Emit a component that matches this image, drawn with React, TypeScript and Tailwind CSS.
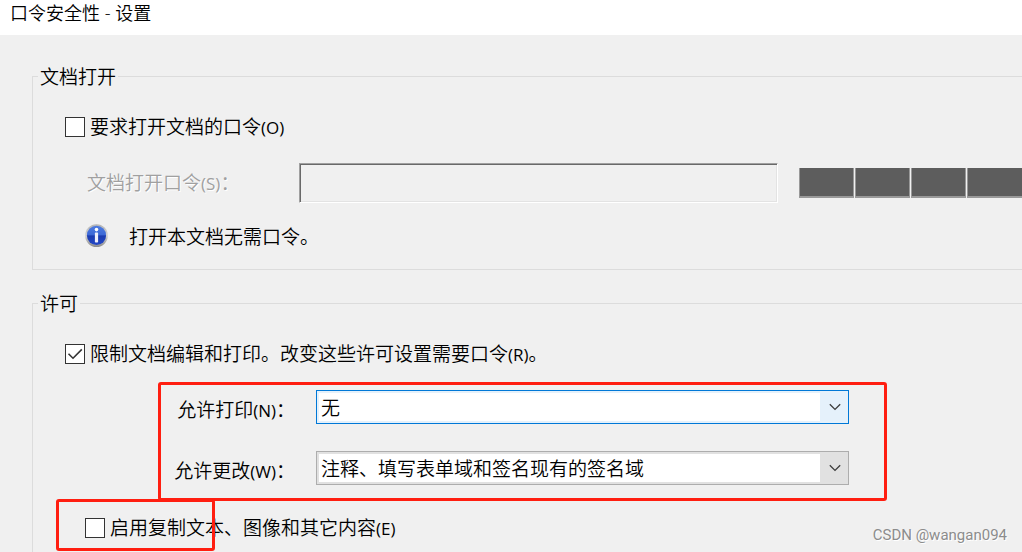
import type { ReactNode } from "react";

function Key({ children }: { children: ReactNode }) {
  return <span className="font-['Open_Sans',sans-serif] text-[17px] font-normal">{children}</span>;
}

function CheckBox({ id, checked, children }: { id: string; checked?: boolean; children: ReactNode }) {
  return (
    <div className="relative flex h-[26px] items-center gap-[5px]">
      <span className="relative flex size-5 shrink-0">
        <input
          id={id}
          type="checkbox"
          defaultChecked={checked}
          className="peer size-5 appearance-none border border-[#333] bg-white"
        />
        <svg
          viewBox="0 0 20 20"
          className="pointer-events-none absolute inset-0 hidden size-5 peer-checked:block"
          fill="none"
          stroke="#333"
          strokeWidth="1.6"
        >
          <path d="M3.5 9.8 L8 14.2 L16.8 5.4" />
        </svg>
      </span>
      <label htmlFor={id} className="whitespace-nowrap">
        {children}
      </label>
    </div>
  );
}

function DropDown({ id, options, active }: { id: string; options: string[]; active?: boolean }) {
  return (
    <div
      className={`relative h-[34px] w-full max-w-[533px] border p-0.5 ${
        active ? "border-[#0078d7] bg-[#e5f1fb]" : "border-[#adadad] bg-[#e1e1e1]"
      }`}
    >
      <select id={id} className="block h-full w-full appearance-none bg-white pl-0.5 outline-none">
        {options.map((o) => (
          <option key={o}>{o}</option>
        ))}
      </select>
      <span
        className={`pointer-events-none absolute inset-y-0 right-0 flex w-7 items-center justify-center pl-0.5 ${
          active ? "bg-[#e5f1fb]" : "bg-[#e1e1e1]"
        }`}
      >
        <svg width="12" height="8" viewBox="0 0 12 8" fill="none" stroke="#3c3c3c" strokeWidth="1.3">
          <path d="M0.8 1.2 L6 6.4 L11.2 1.2" />
        </svg>
      </span>
    </div>
  );
}

function InfoIcon() {
  return (
    <svg width="24" height="24" viewBox="0 0 24 24" className="shrink-0">
      <defs>
        <linearGradient id="ring" x1="0" y1="0" x2="0" y2="1">
          <stop offset="0" stopColor="#b4b4b4" />
          <stop offset="0.5" stopColor="#d4d4d4" />
          <stop offset="1" stopColor="#8c8c8c" />
        </linearGradient>
        <linearGradient id="ball" x1="0" y1="0" x2="0" y2="1">
          <stop offset="0" stopColor="#4d7be0" />
          <stop offset="0.48" stopColor="#3c68d6" />
          <stop offset="0.52" stopColor="#1c3cae" />
          <stop offset="1" stopColor="#2448c8" />
        </linearGradient>
      </defs>
      <circle cx="11.5" cy="11.6" r="11.4" fill="url(#ring)" />
      <circle cx="11.5" cy="11.4" r="9.6" fill="url(#ball)" />
      <circle cx="11.5" cy="5.6" r="1.8" fill="#fff" />
      <rect x="9.9" y="8.6" width="3.2" height="10" rx="0.8" fill="#f0f0fa" />
    </svg>
  );
}

const group = "min-w-0 border border-r-0 border-[#dcdcdc] pl-8";
const legend = "-ml-[27px] h-[26px] px-0.5";
const cell = "border-x border-b-2 border-[#999] bg-[#5d5d5d]";

export default function App() {
  return (
    <div className="relative flex min-h-screen flex-col overflow-hidden bg-[#f0f0f0] font-['Noto_Sans_CJK_SC',sans-serif] text-[19px] leading-[26px] font-[350] text-black">
      <header className="h-[35px] bg-white pl-2.5">
        <h1 className="font-['Open_Sans','Noto_Sans_CJK_SC',sans-serif] text-[18px]">口令安全性 - 设置</h1>
      </header>
      <main className="flex flex-1 flex-col gap-5 pt-7 pl-8">
        <fieldset className={`${group} pb-5`}>
          <legend className={legend}>文档打开</legend>
          <div className="pt-[25px]">
            <CheckBox id="require">
              要求打开文档的口令<Key>(O)</Key>
            </CheckBox>
          </div>
          <div className="mt-[23px] flex h-10 items-center">
            <label
              htmlFor="password"
              className="w-[234px] shrink-0 pl-[22px] text-[#a0a0a0] [text-shadow:1px_1px_0_#fff]"
            >
              文档打开口令<Key>(S)</Key>：
            </label>
            <input
              id="password"
              type="password"
              disabled
              className="h-10 w-full max-w-[479px] border border-t-[#a0a0a0] border-r-white border-b-white border-l-[#a0a0a0] bg-[#f0f0f0] shadow-[inset_1px_1px_0_#696969,inset_-1px_-1px_0_#e3e3e3]"
            />
            <div className="ml-[21px] flex h-[30px] min-w-[223px] flex-1 gap-px">
              <span className={`${cell} w-[55px]`} />
              <span className={`${cell} w-[55px]`} />
              <span className={`${cell} w-[55px]`} />
              <span className={`${cell} flex-1 border-r-0`} />
            </div>
          </div>
          <div className="mt-5 flex h-[26px] items-center gap-5 pl-5">
            <InfoIcon />
            <p>打开本文档无需口令。</p>
          </div>
        </fieldset>

        <fieldset className={`${group} flex-1 border-b-0 pb-[11px]`}>
          <legend className={legend}>许可</legend>
          <div className="pt-[25px]">
            <CheckBox id="restrict" checked>
              限制文档编辑和打印。改变这些许可设置需要口令<Key>(R)</Key>。
            </CheckBox>
          </div>
          <div className="relative mt-[23px] mr-[135px] ml-[93px] flex flex-col gap-[27px] pr-[38px]">
            <div className="flex items-end">
              <label htmlFor="print" className="w-[158px] shrink-0 pr-[21px] text-right whitespace-nowrap">
                允许打印<Key>(N)</Key>：
              </label>
              <DropDown id="print" options={["无", "低分辨率", "高分辨率"]} active />
            </div>
            <div className="flex items-end">
              <label htmlFor="change" className="w-[158px] shrink-0 pr-[21px] text-right whitespace-nowrap">
                允许更改<Key>(W)</Key>：
              </label>
              <DropDown id="change" options={["注释、填写表单域和签名现有的签名域", "无"]} />
            </div>
            <div className="pointer-events-none absolute inset-x-0 -top-2 -bottom-4 rounded-[3px] border-3 border-[#ff1e10]" />
          </div>
          <div className="relative mt-[30px] pl-5">
            <CheckBox id="copy">
              启用复制文本、图像和其它内容<Key>(E)</Key>
            </CheckBox>
            <div className="pointer-events-none absolute -top-4 -bottom-2.5 -left-[9px] w-[159px] rounded-[3px] border-3 border-[#ff1e10]" />
          </div>
        </fieldset>
      </main>
      <p className="absolute right-[15px] bottom-1 font-[Roboto,sans-serif] text-[15px] font-normal text-[#8c8c8c] [text-shadow:1px_1px_0_#fff]">
        CSDN @wangan094
      </p>
    </div>
  );
}
